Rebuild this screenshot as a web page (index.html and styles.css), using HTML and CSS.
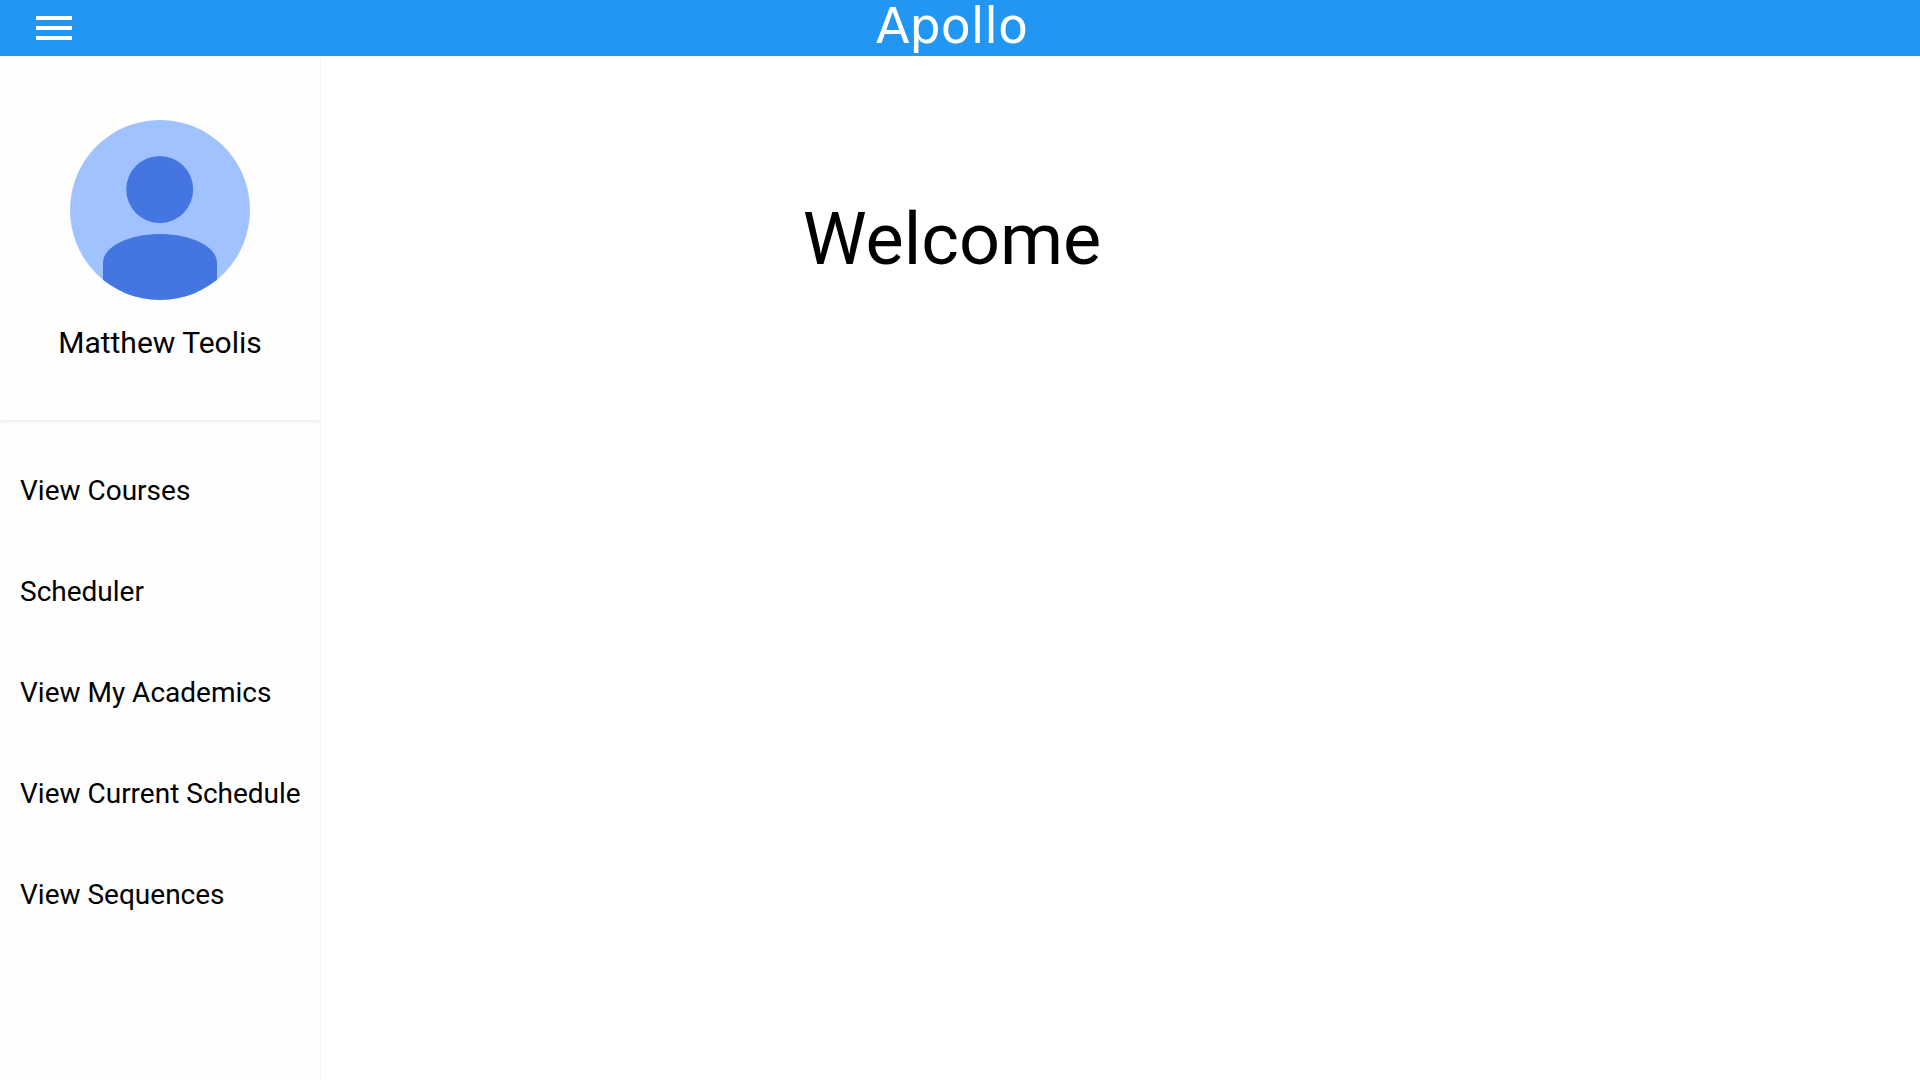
FILE: index.html
```html
<!DOCTYPE html>
<html lang="en">
<head>
<meta charset="utf-8">
<title>Apollo</title>
<meta name="viewport" content="width=device-width, initial-scale=1">
<link rel="stylesheet" href="styles.css">
</head>
<body>
<header class="toolbar">
  <button class="menu-button" type="button" aria-label="Toggle menu">
    <svg class="menu-icon" viewBox="0 0 36 24" aria-hidden="true"><path d="M0 0h36v4H0zM0 10h36v4H0zM0 20h36v4H0z"/></svg>
  </button>
  <div class="brand">Apollo</div>
</header>
<div class="layout">
  <aside class="sidebar">
    <section class="profile">
      <svg class="avatar" viewBox="0 0 180 180" aria-hidden="true">
        <clipPath id="avatar-clip"><circle cx="90" cy="90" r="90"/></clipPath>
        <g clip-path="url(#avatar-clip)">
          <path class="avatar-back" d="M0 0h180v180H0z"/>
          <circle class="avatar-person" cx="89.7" cy="69.5" r="33.5"/>
          <path class="avatar-person" d="M33 180V143C33 126 60 114 90 114S147 126 147 143V180z"/>
        </g>
      </svg>
      <div class="name">Matthew Teolis</div>
    </section>
    <nav class="nav">
      <a class="nav-link" href="#courses">View Courses</a>
      <a class="nav-link" href="#scheduler">Scheduler</a>
      <a class="nav-link" href="#academics">View My Academics</a>
      <a class="nav-link" href="#schedule">View Current Schedule</a>
      <a class="nav-link" href="#sequences">View Sequences</a>
    </nav>
  </aside>
  <main class="content">
    <h1 class="welcome">Welcome</h1>
  </main>
</div>
</body>
</html>
```
FILE: styles.css
```css
* { box-sizing: border-box; }

body {
  margin: 0;
  min-height: 100vh;
  display: flex;
  flex-direction: column;
  background: #fff;
  color: #000;
  font-family: Roboto, sans-serif;
}

.toolbar {
  display: grid;
  grid-template-columns: 108px 1fr 108px;
  align-items: start;
  padding-right: 16px;
  background: #2196f3;
  color: #fff;
}

.menu-button {
  height: 56px;
  padding: 0 36px;
  border: 0;
  background: none;
  color: inherit;
  cursor: pointer;
}

.menu-icon {
  display: block;
  width: 36px;
  height: 24px;
  fill: currentColor;
}

.brand {
  font-family: "DejaVu Sans", sans-serif;
  font-size: 49px;
  line-height: 54px;
  text-align: center;
}

.layout {
  flex: 1;
  display: grid;
  grid-template-columns: 320px 1fr;
}

.sidebar {
  background: #fefefe;
  box-shadow: 1px 0 1px rgba(0, 0, 0, 0.04);
}

.profile {
  display: flex;
  flex-direction: column;
  align-items: center;
  gap: 25px;
  padding: 64px 20px 59px;
  box-shadow: 0 2px 4px rgba(0, 0, 0, 0.08);
  clip-path: inset(0 0 -8px 0);
}

.avatar {
  width: 180px;
  height: 180px;
}

.avatar-back { fill: #a0c3ff; }
.avatar-person { fill: #4475e1; }

.name {
  font-size: 30px;
  line-height: 36px;
}

.nav {
  display: flex;
  flex-direction: column;
  padding-top: 20px;
}

.nav-link {
  padding: 0 20px;
  font-size: 28px;
  line-height: 101px;
  color: inherit;
  text-decoration: none;
  white-space: nowrap;
}

.content {
  padding: 142px 336px 0 0;
  text-align: center;
}

.welcome {
  margin: 0;
  font-size: 72px;
  line-height: 84px;
  font-weight: 400;
}
```
